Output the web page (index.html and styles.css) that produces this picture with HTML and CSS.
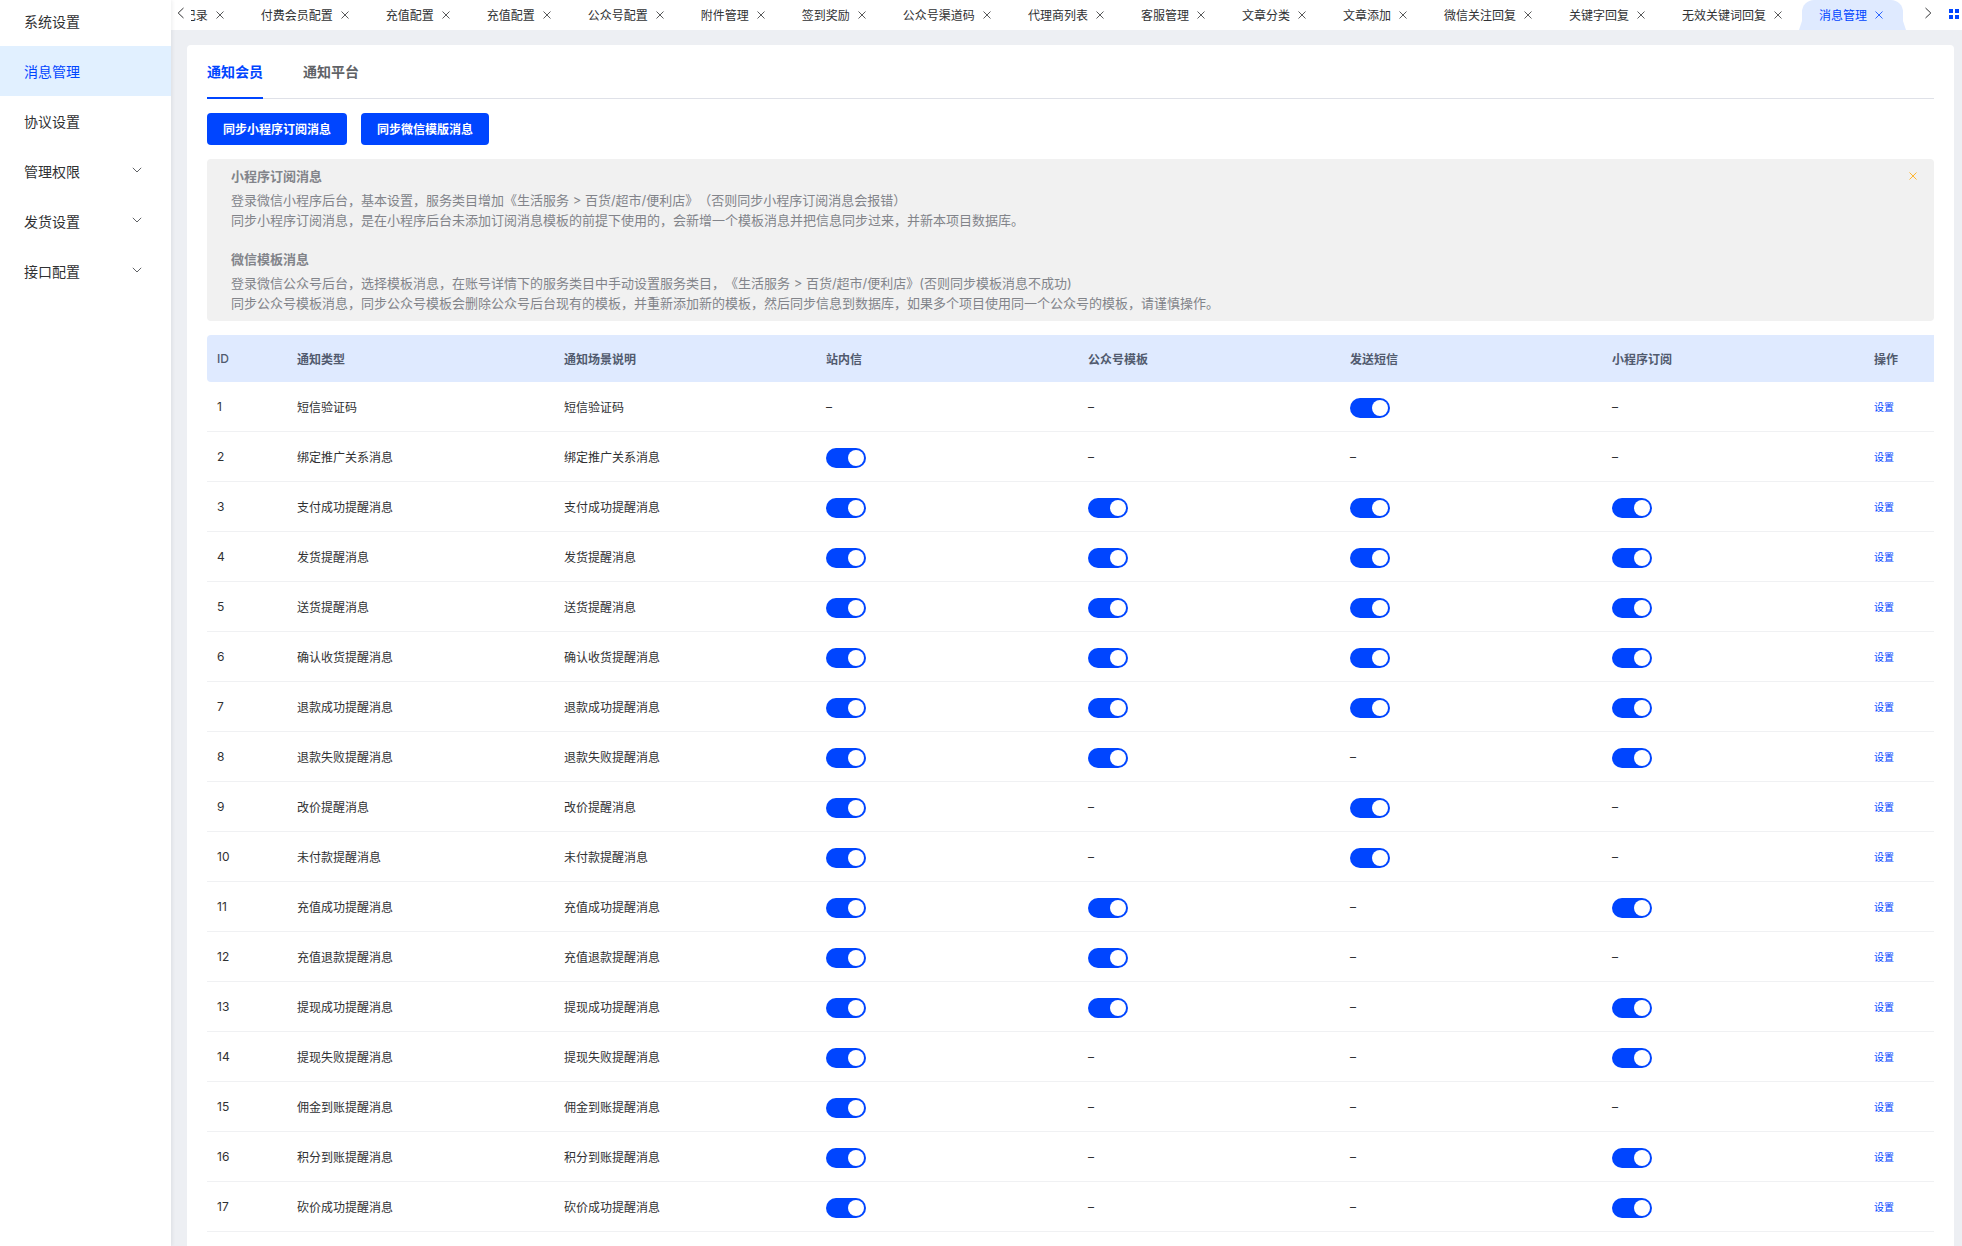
FILE: index.html
```html
<!DOCTYPE html>
<html lang="zh-CN">
<head>
    <meta charset="UTF-8">
    <title>消息管理</title>
    <link rel="stylesheet" href="styles.css">
</head>
<body>
    <svg class="sprite" aria-hidden="true">
        <symbol id="close" viewBox="0 0 8 8"><path d="M0.5 0.5L7.5 7.5M7.5 0.5L0.5 7.5"/></symbol>
        <symbol id="down" viewBox="0 0 10 6"><path d="M0.8 0.8L5 5L9.2 0.8"/></symbol>
        <symbol id="left" viewBox="0 0 8 12"><path d="M6.5 1L1.2 6L6.5 11"/></symbol>
        <symbol id="right" viewBox="0 0 8 12"><path d="M1.5 1L6.8 6L1.5 11"/></symbol>
    </svg>
    <div class="layout">
        <aside class="sidebar">
            <nav class="menu">
                <a href="#">系统设置</a>
                <a href="#" class="active">消息管理</a>
                <a href="#">协议设置</a>
                <a href="#">管理权限<svg class="down"><use href="#down"/></svg></a>
                <a href="#">发货设置<svg class="down"><use href="#down"/></svg></a>
                <a href="#">接口配置<svg class="down"><use href="#down"/></svg></a>
            </nav>
        </aside>
        <div class="main">
            <header class="tags">
                <button class="arrow prev" aria-label="向左"><svg><use href="#left"/></svg></button>
                <div class="tag-list" id="tags"></div>
                <button class="arrow next" aria-label="向右"><svg><use href="#right"/></svg></button>
                <button class="grid" aria-label="更多"><svg viewBox="0 0 10 10"><path d="M0 0h4v4H0zM6 0h4v4H6zM0 6h4v4H0zM6 6h4v4H6z"/></svg></button>
            </header>
            <section class="card">
                <nav class="tabs">
                    <a href="#" class="active">通知会员</a>
                    <a href="#">通知平台</a>
                </nav>
                <div class="actions">
                    <button class="btn">同步小程序订阅消息</button>
                    <button class="btn">同步微信模版消息</button>
                </div>
                <div class="alert">
                    <div class="alert-body">
                        <h4>小程序订阅消息</h4>
                        <p>登录微信小程序后台，基本设置，服务类目增加《生活服务 &gt; 百货/超市/便利店》（否则同步小程序订阅消息会报错）</p>
                        <p>同步小程序订阅消息，是在小程序后台未添加订阅消息模板的前提下使用的，会新增一个模板消息并把信息同步过来，并新本项目数据库。</p>
                        <h4>微信模板消息</h4>
                        <p>登录微信公众号后台，选择模板消息，在账号详情下的服务类目中手动设置服务类目，《生活服务 &gt; 百货/超市/便利店》(否则同步模板消息不成功)</p>
                        <p>同步公众号模板消息，同步公众号模板会删除公众号后台现有的模板，并重新添加新的模板，然后同步信息到数据库，如果多个项目使用同一个公众号的模板，请谨慎操作。</p>
                    </div>
                    <button class="alert-close" aria-label="关闭"><svg><use href="#close"/></svg></button>
                </div>
                <table class="table">
                    <colgroup>
                        <col class="col-id">
                        <col class="col-type">
                        <col>
                        <col>
                        <col>
                        <col>
                        <col>
                        <col class="col-action">
                    </colgroup>
                    <thead>
                        <tr>
                            <th>ID</th>
                            <th>通知类型</th>
                            <th>通知场景说明</th>
                            <th>站内信</th>
                            <th>公众号模板</th>
                            <th>发送短信</th>
                            <th>小程序订阅</th>
                            <th>操作</th>
                        </tr>
                    </thead>
                    <tbody id="rows"></tbody>
                </table>
            </section>
        </div>
    </div>
    <script>
        const tags = ['记录', '付费会员配置', '充值配置', '充值配置', '公众号配置', '附件管理', '签到奖励',
            '公众号渠道码', '代理商列表', '客服管理', '文章分类', '文章添加', '微信关注回复', '关键字回复',
            '无效关键词回复', '消息管理'];

        document.getElementById('tags').innerHTML = tags.map((name, i) => `
            <div class="tag${i === tags.length - 1 ? ' active' : ''}">
                <a href="#">${name}</a>
                <button aria-label="关闭${name}"><svg><use href="#close"/></svg></button>
            </div>`).join('');

        // name, then: 站内信, 公众号模板, 发送短信, 小程序订阅 (1 = switch, 0 = not supported)
        const channels = ['站内信', '公众号模板', '发送短信', '小程序订阅'];
        const list = [
            ['短信验证码', 0, 0, 1, 0],
            ['绑定推广关系消息', 1, 0, 0, 0],
            ['支付成功提醒消息', 1, 1, 1, 1],
            ['发货提醒消息', 1, 1, 1, 1],
            ['送货提醒消息', 1, 1, 1, 1],
            ['确认收货提醒消息', 1, 1, 1, 1],
            ['退款成功提醒消息', 1, 1, 1, 1],
            ['退款失败提醒消息', 1, 1, 0, 1],
            ['改价提醒消息', 1, 0, 1, 0],
            ['未付款提醒消息', 1, 0, 1, 0],
            ['充值成功提醒消息', 1, 1, 0, 1],
            ['充值退款提醒消息', 1, 1, 0, 0],
            ['提现成功提醒消息', 1, 1, 0, 1],
            ['提现失败提醒消息', 1, 0, 0, 1],
            ['佣金到账提醒消息', 1, 0, 0, 0],
            ['积分到账提醒消息', 1, 0, 0, 1],
            ['砍价成功提醒消息', 1, 0, 0, 1]
        ];

        document.getElementById('rows').innerHTML = list.map(([name, ...on], i) => `
            <tr>
                <td>${i + 1}</td>
                <td>${name}</td>
                <td>${name}</td>
                ${on.map((v, c) => v
                    ? `<td><input class="switch" type="checkbox" aria-label="${name} ${channels[c]}" checked></td>`
                    : '<td>–</td>').join('')}
                <td><a class="link" href="#">设置</a></td>
            </tr>`).join('');
    </script>
</body>
</html>
```
FILE: styles.css
```css
* { box-sizing: border-box; }
body {
    margin: 0;
    font-family: Inter, "Noto Sans CJK SC", sans-serif;
    font-size: 12px;
    color: #303133;
    background: #edeff3;
    text-spacing-trim: space-all;
}
a { color: inherit; text-decoration: none; }
button {
    padding: 0;
    border: none;
    background: none;
    font: inherit;
    color: inherit;
    cursor: pointer;
}
svg { display: block; fill: none; stroke: currentColor; }
.sprite { display: none; }

.layout { display: flex; height: 100vh; overflow: hidden; }
.sidebar {
    flex: none;
    width: 171px;
    background: #fff;
    box-shadow: 1px 0 4px rgba(0,21,41,0.08);
    z-index: 1;
}
/* list is scrolled a little under the top edge */
.menu { margin-top: -4px; }
.menu a {
    display: flex;
    align-items: center;
    justify-content: space-between;
    height: 50px;
    padding: 0 29px 0 24px;
    font-size: 14px;
}
.menu a.active { background: #e1f0ff; color: #0045ff; }
.down { width: 10px; height: 6px; margin-bottom: 3px; color: #606266; }

.main { flex: 1; min-width: 0; display: flex; flex-direction: column; }
.tags {
    flex: none;
    display: flex;
    align-items: center;
    height: 30px;
    padding-right: 3px;
    background: #fff;
}
.arrow { flex: none; height: 30px; padding-bottom: 4px; }
.arrow svg { width: 8px; height: 12px; }
.prev { width: 20px; padding-left: 6px; }
.next { width: 40px; padding-left: 15px; }
.grid { flex: none; padding-bottom: 3px; color: #0045ff; }
.grid svg { width: 10px; height: 10px; fill: currentColor; stroke: none; }
.tag-list {
    flex: 1;
    min-width: 0;
    display: flex;
    justify-content: flex-end;
    overflow: hidden;
    padding-right: 6px;
}
.tag {
    position: relative;
    flex: none;
    display: flex;
    align-items: center;
    gap: 8px;
    height: 30px;
    padding: 0 20px 1px 17px;
}
.tag svg { width: 8px; height: 8px; opacity: 0.8; }
.tag.active { background: #dfeaff; color: #0045ff; border-radius: 12px 12px 0 0; }
.tag.active::before, .tag.active::after {
    content: "";
    position: absolute;
    bottom: 0;
    width: 3px;
    height: 9px;
    background: #dfeaff;
}
.tag.active::before { left: -3px; clip-path: polygon(100% 0, 100% 100%, 0 100%); }
.tag.active::after { right: -3px; clip-path: polygon(0 0, 100% 100%, 0 100%); }

.card {
    flex: 1;
    margin: 15px 8px 0 16px;
    padding: 0 20px;
    background: #fff;
    border-radius: 4px 4px 0 0;
}
.tabs {
    display: flex;
    gap: 40px;
    height: 54px;
    box-shadow: inset 0 -1px #dfe1e8;
    color: #606266;
    font-size: 14px;
    font-weight: bold;
    line-height: 54px;
}
.tabs a.active { color: #0045ff; border-bottom: 2px solid #0045ff; }
.actions { display: flex; gap: 14px; margin: 14px 0; }
.btn {
    height: 32px;
    padding: 0 16px 1px;
    background: #0045ff;
    border-radius: 4px;
    color: #fff;
    font-weight: bold;
}

.alert {
    display: flex;
    justify-content: space-between;
    align-items: flex-start;
    margin-bottom: 14px;
    padding: 7px 17px 8px 24px;
    background: #f1f1f1;
    border-radius: 4px;
    color: #82848a;
    font-size: 13px;
    line-height: 20px;
}
.alert h4 { margin: 0 0 4px; font-size: 13px; }
.alert p { margin: 0; }
.alert p + h4 { margin-top: 19px; }
.alert-close { padding: 6px 0; color: #ffb52e; }
.alert-close svg { width: 8px; height: 8px; }

.table { width: 100%; table-layout: fixed; border-collapse: separate; border-spacing: 0; }
.col-id { width: 80px; }
.col-type { width: 267px; }
.col-action { width: 70px; }
.table th, .table td { padding: 0 10px; text-align: left; }
.table th { height: 47px; background: #dfeaff; color: #515a6e; font-weight: bold; }
.table th:first-child { border-radius: 4px 0 0 4px; font-weight: 500; }
.table td { height: 50px; border-bottom: 1px solid #f0f1f3; }
.link { color: #0045ff; font-size: 10px; }
.switch {
    appearance: none;
    display: block;
    width: 40px;
    height: 20px;
    margin: 3px 0 0;
    padding: 2px;
    border-radius: 10px;
    background: #c0c4cc;
    cursor: pointer;
}
.switch::before {
    content: "";
    display: block;
    width: 16px;
    height: 16px;
    border-radius: 50%;
    background: #fff;
}
.switch:checked { background: #0045ff; }
.switch:checked::before { margin-left: auto; }
```
